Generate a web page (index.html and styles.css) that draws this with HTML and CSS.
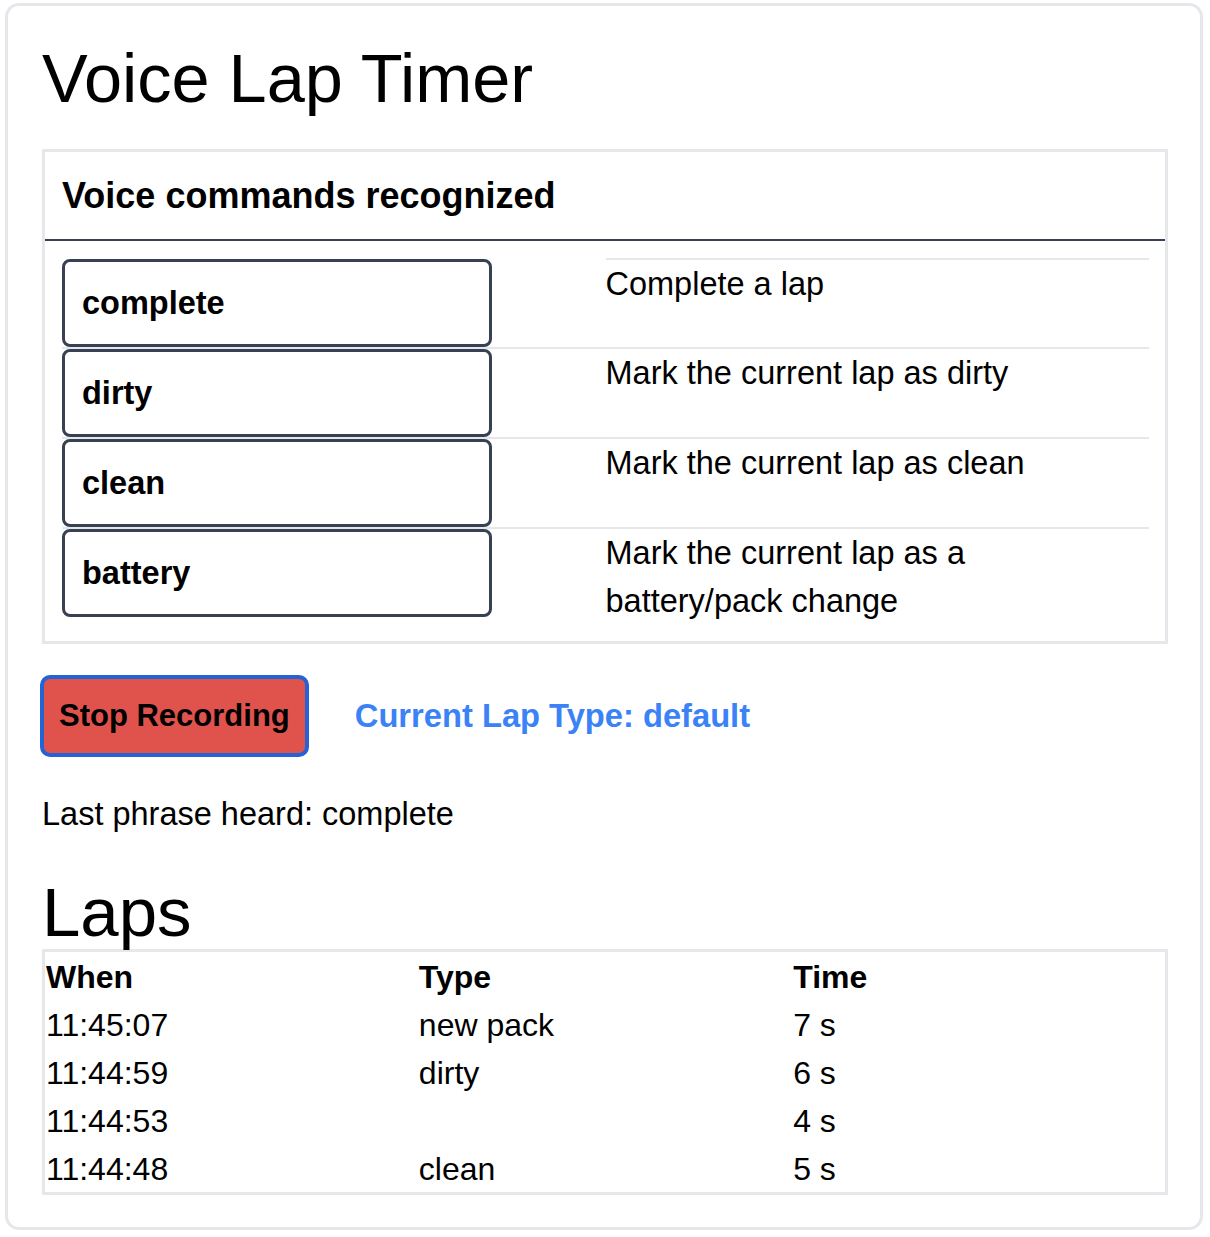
FILE: index.html
```html
<!DOCTYPE html>
<html lang="en">
<head>
<meta charset="utf-8">
<title>Voice Lap Timer</title>
<link rel="stylesheet" href="styles.css">
</head>
<body>
<main class="card">
  <h1 class="title">Voice Lap Timer</h1>

  <section class="commands">
    <h2 class="commands-head">Voice commands recognized</h2>
    <table class="cmd-table">
      <tbody>
        <tr>
          <td class="cmd-cell"><div class="cmd">complete</div></td>
          <td class="desc">Complete a lap</td>
        </tr>
        <tr>
          <td class="cmd-cell"><div class="cmd">dirty</div></td>
          <td class="desc">Mark the current lap as dirty</td>
        </tr>
        <tr>
          <td class="cmd-cell"><div class="cmd">clean</div></td>
          <td class="desc">Mark the current lap as clean</td>
        </tr>
        <tr>
          <td class="cmd-cell"><div class="cmd">battery</div></td>
          <td class="desc">Mark the current lap as a battery/pack change</td>
        </tr>
      </tbody>
    </table>
  </section>

  <div class="controls">
    <button class="stop-btn" type="button">Stop Recording</button>
    <span class="lap-type">Current Lap Type: default</span>
  </div>

  <p class="last-phrase">Last phrase heard: complete</p>

  <h2 class="laps-title">Laps</h2>
  <table class="laps">
    <thead>
      <tr><th>When</th><th>Type</th><th>Time</th></tr>
    </thead>
    <tbody>
      <tr><td>11:45:07</td><td>new pack</td><td>7 s</td></tr>
      <tr><td>11:44:59</td><td>dirty</td><td>6 s</td></tr>
      <tr><td>11:44:53</td><td></td><td>4 s</td></tr>
      <tr><td>11:44:48</td><td>clean</td><td>5 s</td></tr>
    </tbody>
  </table>
</main>
</body>
</html>
```

FILE: styles.css
```css
html, body {
  margin: 0;
  padding: 0;
  background: #ffffff;
}

body {
  font-family: "Liberation Sans", Arial, sans-serif;
  color: #000000;
  font-size: 32.5px;
  line-height: 48px;
  padding: 3px 7px 7px 5px;
}

.card {
  border: 3px solid #e5e7eb;
  border-radius: 14px;
  padding: 33px 32px 32px 34px;
}

.title {
  margin: 0 0 30px 0;
  font-size: 68.5px;
  line-height: 80px;
  font-weight: 400;
}

.commands {
  border: 3px solid #e5e7eb;
  padding-bottom: 16px;
}

.commands-head {
  margin: 0;
  padding: 16px 17px;
  font-size: 36px;
  line-height: 55px;
  font-weight: 700;
  border-bottom: 2px solid #374151;
}

.cmd-table {
  width: calc(100% - 33px);
  margin: 17px 16px 0 17px;
  border-collapse: collapse;
  table-layout: fixed;
}

.cmd-table td {
  box-sizing: border-box;
  width: 50%;
  padding: 0;
  vertical-align: top;
  border-top: 2px solid #e5e7eb;
}

.cmd-table tr:first-child .cmd-cell {
  border-top: none;
}

.cmd {
  box-sizing: border-box;
  width: 430px;
  height: 88px;
  border: 3px solid #374151;
  border-radius: 8px;
  display: flex;
  align-items: center;
  padding-left: 17px;
  font-weight: 700;
  font-size: 32.5px;
}

.cmd-table .desc {
  font-size: 32.5px;
  line-height: 48px;
  padding-right: 12px;
}

.controls {
  display: flex;
  align-items: center;
  gap: 46px;
  margin-top: 31px;
}

.stop-btn {
  box-sizing: border-box;
  height: 82px;
  margin-left: -2px;
  padding: 0 15px;
  background: #e0534c;
  border: 4px solid #2563d4;
  border-radius: 10px;
  font-family: "Liberation Sans", Arial, sans-serif;
  font-size: 31px;
  font-weight: 700;
  color: #000000;
}

.lap-type {
  color: #3b82f6;
  font-weight: 700;
  font-size: 32.7px;
}

.last-phrase {
  margin: 33px 0 0 0;
}

.laps-title {
  margin: 39px 0 0 0;
  font-size: 69px;
  line-height: 72px;
  font-weight: 400;
}

.laps {
  width: 100%;
  border: 3px solid #e5e7eb;
  border-collapse: collapse;
  table-layout: fixed;
}

.laps th,
.laps td {
  text-align: left;
  padding: 3px 0 0 1px;
  height: 45px;
  line-height: 45px;
  font-size: 32px;
}

.laps th {
  font-weight: 700;
}
```
